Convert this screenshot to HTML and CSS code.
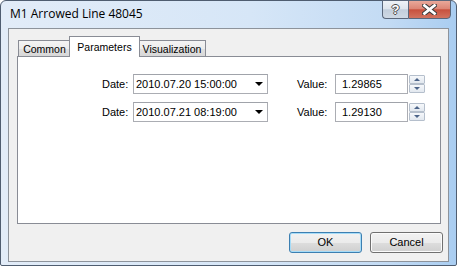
FILE: index.html
```html
<!DOCTYPE html>
<html>
<head>
<meta charset="utf-8">
<link rel="stylesheet" href="styles.css">
</head>
<body>
<div class="window">
  <div class="titlebar">
    <span class="title">M1 Arrowed Line 48045</span>
    <div class="caption-buttons">
      <div class="cap help"><span>?</span></div>
      <div class="cap close">
        <svg width="15" height="11" viewBox="0 0 15 11">
          <path d="M2.5 1.5 L12.5 9.5 M12.5 1.5 L2.5 9.5" stroke="#3b3b3b" stroke-width="4.8" stroke-linecap="square" fill="none"/>
          <path d="M2.5 1.5 L12.5 9.5 M12.5 1.5 L2.5 9.5" stroke="#ffffff" stroke-width="2.8" stroke-linecap="square" fill="none"/>
        </svg>
      </div>
    </div>
  </div>
  <div class="client">
    <div class="tabs">
      <div class="tab tab-common">Common</div>
      <div class="tab tab-params active">Parameters</div>
      <div class="tab tab-vis">Visualization</div>
    </div>
    <div class="panel">
      <div class="row">
        <span class="label date-label">Date:</span>
        <div class="combo"><span class="combo-text">2010.07.20 15:00:00</span><i class="arrow"></i></div>
        <span class="label value-label">Value:</span>
        <div class="input">1.29865</div>
        <div class="spin"><div class="spin-btn up"><i></i></div><div class="spin-btn down"><i></i></div></div>
      </div>
      <div class="row">
        <span class="label date-label">Date:</span>
        <div class="combo"><span class="combo-text">2010.07.21 08:19:00</span><i class="arrow"></i></div>
        <span class="label value-label">Value:</span>
        <div class="input">1.29130</div>
        <div class="spin"><div class="spin-btn up"><i></i></div><div class="spin-btn down"><i></i></div></div>
      </div>
    </div>
    <div class="buttons">
      <div class="btn default">OK</div>
      <div class="btn">Cancel</div>
    </div>
  </div>
</div>
</body>
</html>
```

FILE: styles.css
```css
html, body {
  margin: 0;
  padding: 0;
  background: #ffffff;
}
body {
  width: 457px;
  height: 266px;
  overflow: hidden;
  font-family: "Liberation Sans", Arial, sans-serif;
  font-size: 11px;
  color: #000;
}
.window {
  box-sizing: border-box;
  width: 457px;
  height: 266px;
  border: 1px solid #4f5d70;
  border-radius: 6px 6px 2px 2px;
  padding: 0 7px 3px 7px;
  display: flex;
  flex-direction: column;
  background: linear-gradient(to right, #e2ecf8 0%, #d6e6f7 55%, #c3dbf4 85%, #a9cdf1 100%);
}
.titlebar {
  height: 27px;
  display: flex;
  align-items: flex-start;
  flex: none;
}
.title {
  font-family: "Open Sans", "Noto Sans", sans-serif;
  font-size: 12px;
  line-height: 16px;
  margin-top: 5px;
  padding-left: 2px;
  color: #000;
}
.caption-buttons {
  margin-left: auto;
  margin-right: -2px;
  margin-top: -1px;
  display: flex;
}
.cap {
  box-sizing: border-box;
  height: 19px;
  border: 1px solid #5a677b;
  display: flex;
  align-items: center;
  justify-content: center;
}
.help {
  width: 26px;
  border-right: none;
  border-radius: 0 0 0 4px;
  background: linear-gradient(#eef2f7 0%, #dfe5ed 45%, #c2cedc 52%, #cfd9e5 100%);
}
.help span {
  font-family: "Liberation Sans", sans-serif;
  font-weight: bold;
  font-size: 13px;
  line-height: 13px;
  color: #fff;
  text-shadow: 1px 0 0 #4a4a4a, -1px 0 0 #4a4a4a, 0 1px 0 #4a4a4a, 0 -1px 0 #4a4a4a;
}
.close {
  width: 43px;
  border-radius: 0 0 4px 0;
  background: linear-gradient(#e9a89a 0%, #dc8676 45%, #c8513e 52%, #d2735f 100%);
}
.client {
  box-sizing: border-box;
  height: 234px;
  border: 1px solid #8d939b;
  background: #f0f0f0;
  display: flex;
  flex-direction: column;
}
.tabs {
  display: flex;
  align-items: flex-end;
  height: 20px;
  margin: 7px 0 0 9px;
  position: relative;
  z-index: 1;
}
.tab {
  box-sizing: border-box;
  height: 16px;
  border: 1px solid #898c95;
  border-bottom: none;
  background: linear-gradient(#f4f4f4 0%, #ececec 50%, #e0e0e0 51%, #d8d8d8 100%);
  text-align: center;
  font-size: 10.5px;
  line-height: 15px;
  padding-top: 1px;
}
.tab-common { width: 53px; }
.tab-params { width: 71px; margin-left: -2px; }
.tab-vis { width: 68px; margin-left: -2px; }
.tab.active {
  height: 21px;
  background: #fff;
  margin-bottom: -1px;
  position: relative;
  z-index: 2;
  padding-top: 3px;
}
.panel {
  box-sizing: border-box;
  margin-left: 8px;
  width: 424px;
  height: 168px;
  border: 1px solid #898c95;
  background: #fff;
  padding: 17px 0 0 84px;
  display: flex;
  flex-direction: column;
  gap: 8px;
}
.row {
  display: flex;
  align-items: center;
  height: 20px;
}
.label {
  line-height: 20px;
}
.date-label { width: 31px; }
.value-label { width: 38px; margin-left: 29px; }
.combo {
  box-sizing: border-box;
  width: 135px;
  height: 20px;
  border: 1px solid #abadb3;
  border-top-color: #a0a3aa;
  display: flex;
  align-items: center;
  padding-left: 2px;
}
.combo-text { flex: 1; }
.arrow {
  width: 0;
  height: 0;
  border-left: 4px solid transparent;
  border-right: 4px solid transparent;
  border-top: 4px solid #000;
  margin-right: 4px;
}
.input {
  box-sizing: border-box;
  width: 73px;
  height: 20px;
  border: 1px solid #abadb3;
  border-top-color: #a0a3aa;
  padding-left: 6px;
  line-height: 18px;
}
.spin {
  margin-left: 1px;
  width: 16px;
  height: 18px;
  display: flex;
  flex-direction: column;
}
.spin-btn {
  box-sizing: border-box;
  height: 9px;
  border: 1px solid #b5bfcc;
  border-radius: 1px;
  background: linear-gradient(#f6f8fb, #e2e8ef);
  display: flex;
  align-items: center;
  justify-content: center;
}
.spin-btn i {
  width: 0;
  height: 0;
  border-left: 3px solid transparent;
  border-right: 3px solid transparent;
}
.up i { border-bottom: 3px solid #4c6489; }
.down i { border-top: 3px solid #4c6489; }
.buttons {
  display: flex;
  justify-content: flex-end;
  gap: 8px;
  margin: 8px 5px 0 0;
}
.btn {
  box-sizing: border-box;
  width: 73px;
  height: 21px;
  border: 1px solid #707070;
  border-radius: 3px;
  box-shadow: inset 0 0 0 1px #fbfbfb;
  background: linear-gradient(#f2f2f2 0%, #ebebeb 50%, #dddddd 51%, #cfcfcf 100%);
  text-align: center;
  line-height: 19px;
}
.btn.default {
  border-color: #3c7fb1;
  box-shadow: inset 0 0 0 1px #a6dcf8;
}
```
